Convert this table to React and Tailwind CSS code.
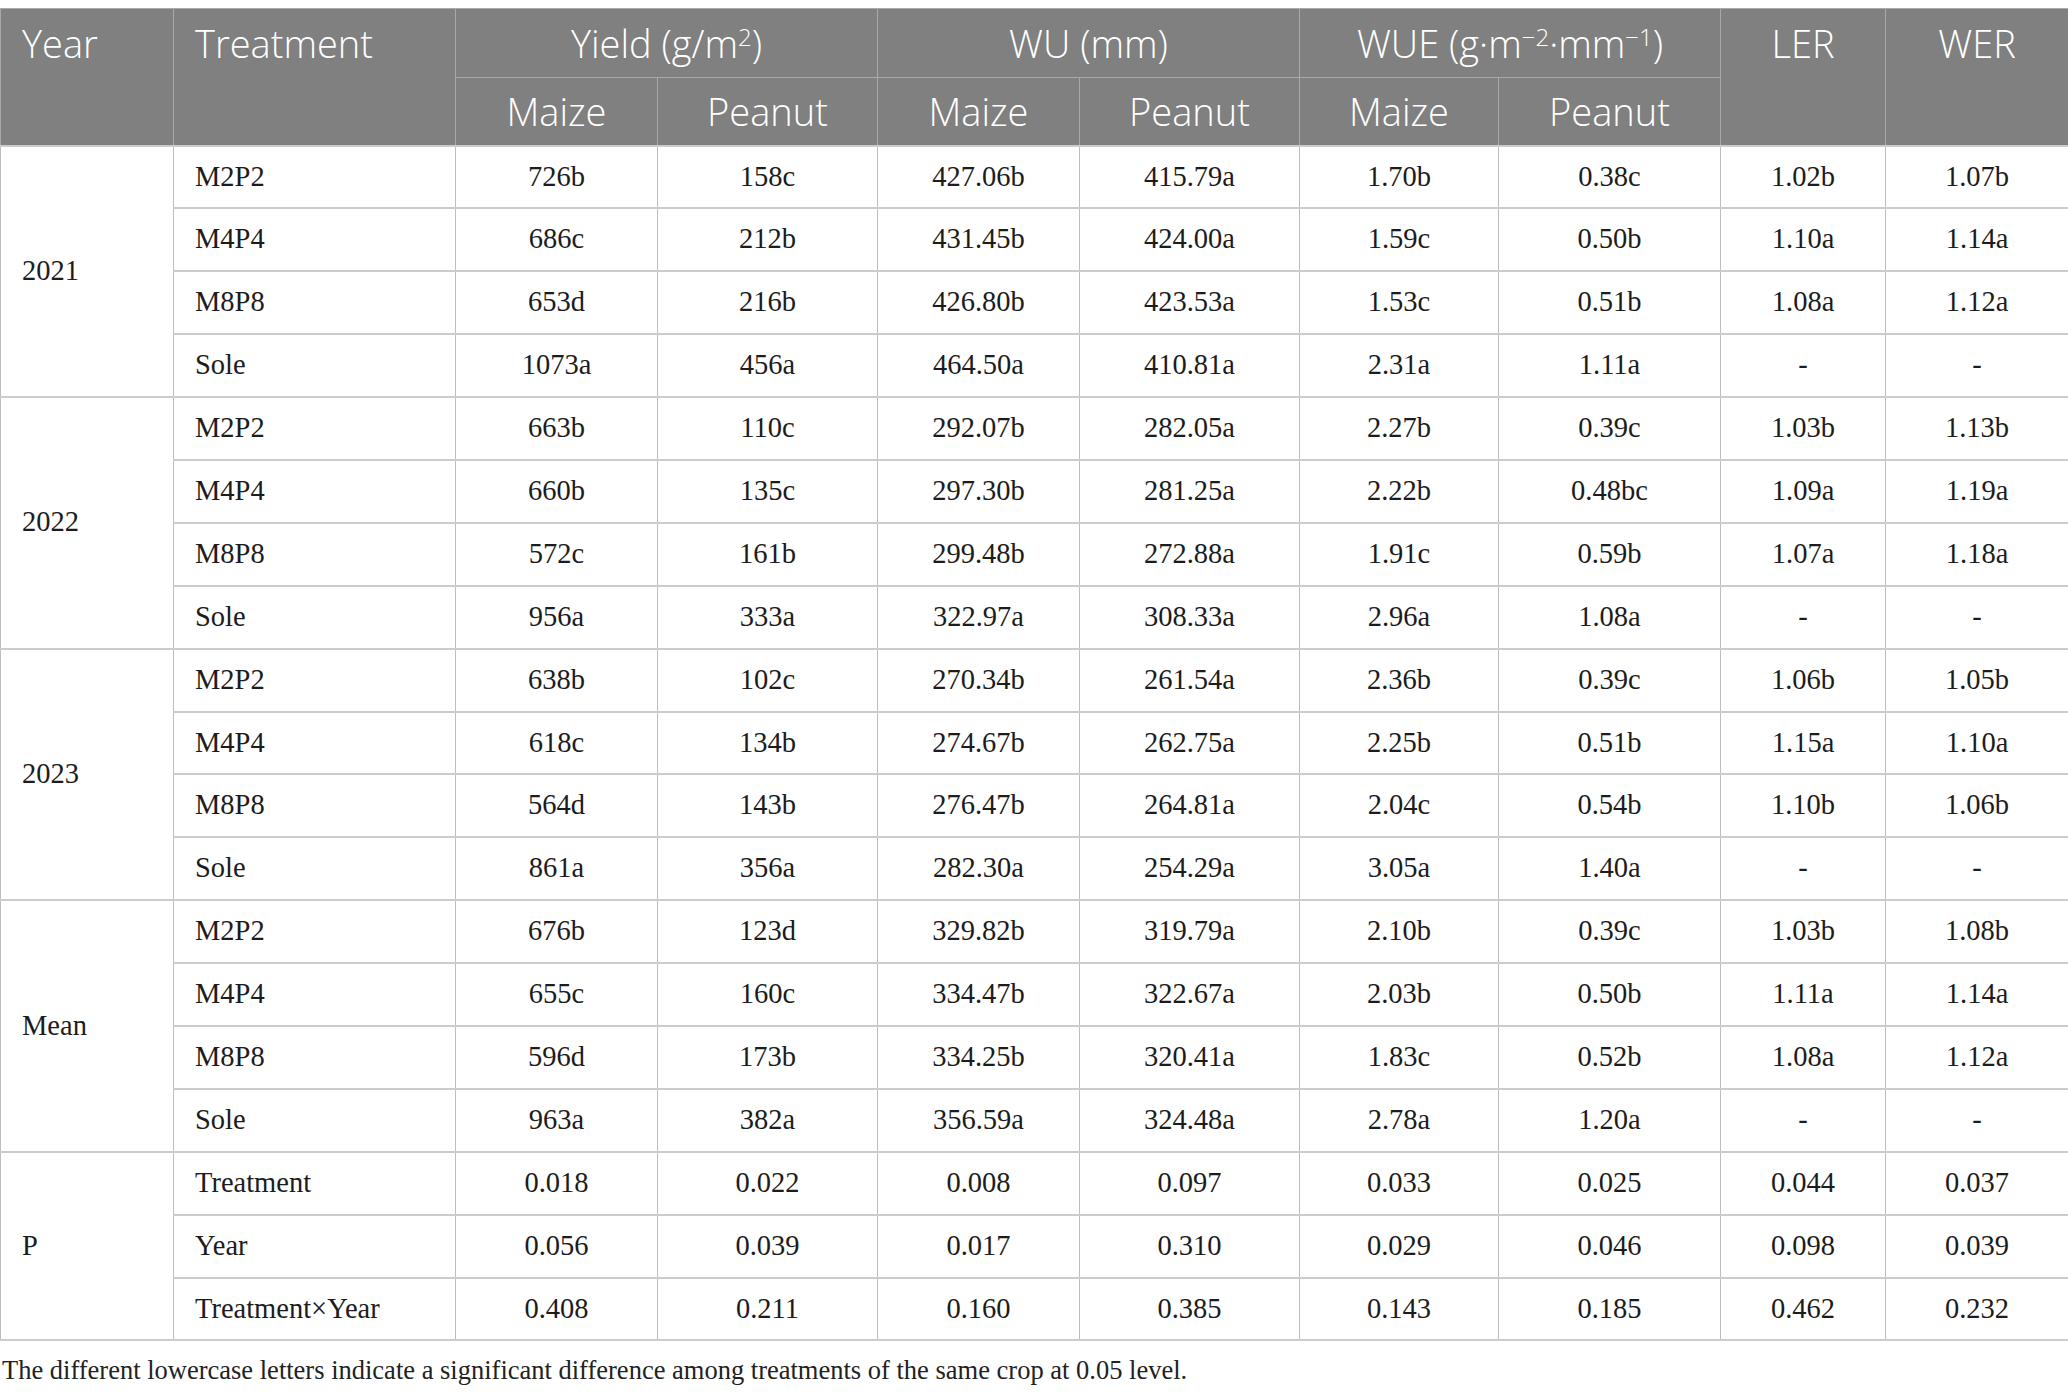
const cols = [173, 282, 202, 220, 202, 220, 199, 222, 165, 183];

const groups = [
  {
    year: '2021',
    rows: [
      ['M2P2', '726b', '158c', '427.06b', '415.79a', '1.70b', '0.38c', '1.02b', '1.07b'],
      ['M4P4', '686c', '212b', '431.45b', '424.00a', '1.59c', '0.50b', '1.10a', '1.14a'],
      ['M8P8', '653d', '216b', '426.80b', '423.53a', '1.53c', '0.51b', '1.08a', '1.12a'],
      ['Sole', '1073a', '456a', '464.50a', '410.81a', '2.31a', '1.11a', '-', '-'],
    ],
  },
  {
    year: '2022',
    rows: [
      ['M2P2', '663b', '110c', '292.07b', '282.05a', '2.27b', '0.39c', '1.03b', '1.13b'],
      ['M4P4', '660b', '135c', '297.30b', '281.25a', '2.22b', '0.48bc', '1.09a', '1.19a'],
      ['M8P8', '572c', '161b', '299.48b', '272.88a', '1.91c', '0.59b', '1.07a', '1.18a'],
      ['Sole', '956a', '333a', '322.97a', '308.33a', '2.96a', '1.08a', '-', '-'],
    ],
  },
  {
    year: '2023',
    rows: [
      ['M2P2', '638b', '102c', '270.34b', '261.54a', '2.36b', '0.39c', '1.06b', '1.05b'],
      ['M4P4', '618c', '134b', '274.67b', '262.75a', '2.25b', '0.51b', '1.15a', '1.10a'],
      ['M8P8', '564d', '143b', '276.47b', '264.81a', '2.04c', '0.54b', '1.10b', '1.06b'],
      ['Sole', '861a', '356a', '282.30a', '254.29a', '3.05a', '1.40a', '-', '-'],
    ],
  },
  {
    year: 'Mean',
    rows: [
      ['M2P2', '676b', '123d', '329.82b', '319.79a', '2.10b', '0.39c', '1.03b', '1.08b'],
      ['M4P4', '655c', '160c', '334.47b', '322.67a', '2.03b', '0.50b', '1.11a', '1.14a'],
      ['M8P8', '596d', '173b', '334.25b', '320.41a', '1.83c', '0.52b', '1.08a', '1.12a'],
      ['Sole', '963a', '382a', '356.59a', '324.48a', '2.78a', '1.20a', '-', '-'],
    ],
  },
  {
    year: 'P',
    rows: [
      ['Treatment', '0.018', '0.022', '0.008', '0.097', '0.033', '0.025', '0.044', '0.037'],
      ['Year', '0.056', '0.039', '0.017', '0.310', '0.029', '0.046', '0.098', '0.039'],
      ['Treatment×Year', '0.408', '0.211', '0.160', '0.385', '0.143', '0.185', '0.462', '0.232'],
    ],
  },
];

const th = 'border border-[#a9a9a9] font-light text-white text-[38px] leading-none';
const td = 'border-x border-x-[#bdbdbd] border-y-2 border-y-[#cccccc] h-[62.9px] p-0';

export default function App() {
  return (
    <div className="bg-white w-[2068px] pt-2 text-[#1c1c1c]">
      <table
        className="table-fixed border-collapse w-[2068px]"
        style={{ fontFamily: '"Liberation Serif", serif' }}
      >
        <colgroup>
          {cols.map((w, i) => (
            <col key={i} style={{ width: w }} />
          ))}
        </colgroup>
        <thead className="bg-[#7f807f]" style={{ fontFamily: '"Open Sans", sans-serif' }}>
          <tr className="h-[69px]">
            <th rowSpan={2} className={`${th} text-left align-top pl-[21px] pt-[15px]`}>Year</th>
            <th rowSpan={2} className={`${th} text-left align-top pl-[21px] pt-[15px]`}>Treatment</th>
            <th colSpan={2} className={th}>
              Yield (g/m<sup className="text-[24px]">2</sup>)
            </th>
            <th colSpan={2} className={th}>WU (mm)</th>
            <th colSpan={2} className={th}>
              WUE (g·m<sup className="text-[24px]">−2</sup>·mm<sup className="text-[24px]">−1</sup>)
            </th>
            <th rowSpan={2} className={`${th} align-top pt-[15px]`}>LER</th>
            <th rowSpan={2} className={`${th} align-top pt-[15px]`}>WER</th>
          </tr>
          <tr className="h-[68px]">
            {['Maize', 'Peanut', 'Maize', 'Peanut', 'Maize', 'Peanut'].map((t, i) => (
              <th key={i} className={th}>{t}</th>
            ))}
          </tr>
        </thead>
        <tbody className="text-[28.5px]">
          {groups.map((g) =>
            g.rows.map((r, ri) => (
              <tr key={g.year + ri}>
                {ri === 0 && (
                  <td rowSpan={g.rows.length} className={`${td} pl-[21px] text-left align-middle`}>
                    {g.year}
                  </td>
                )}
                <td className={`${td} pl-[21px] text-left`}>{r[0]}</td>
                {r.slice(1).map((v, ci) => (
                  <td key={ci} className={`${td} text-center`}>{v}</td>
                ))}
              </tr>
            ))
          )}
        </tbody>
      </table>
      <p
        className="text-[26.5px] text-[#222] pl-[2px] pt-[10px] pb-4"
        style={{ fontFamily: '"Liberation Serif", serif' }}
      >
        The different lowercase letters indicate a significant difference among treatments of the same crop at 0.05 level.
      </p>
    </div>
  );
}
